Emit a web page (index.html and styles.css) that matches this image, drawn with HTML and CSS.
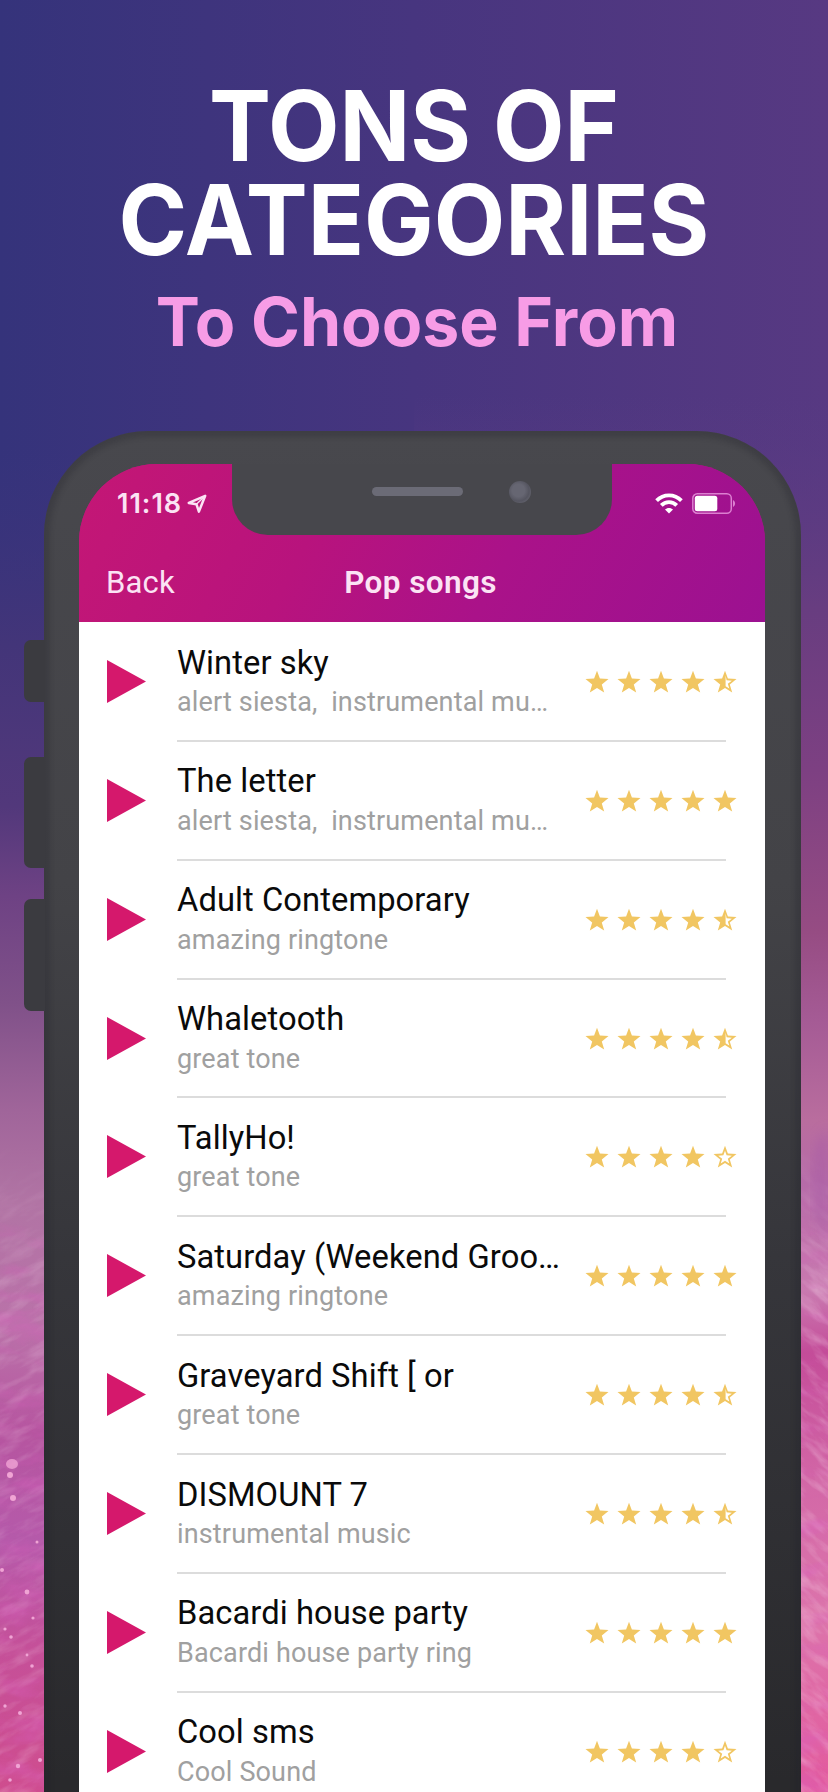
FILE: index.html
```html
<!DOCTYPE html>
<html lang="en">
<head>
<meta charset="utf-8">
<title>Tons of categories</title>
<link rel="stylesheet" href="styles.css">
</head>
<body>
<svg class="defs" width="0" height="0">
  <defs>
    <symbol id="star" viewBox="0 0 24 24"><path d="M12 .8 14.9 8.6 23.5 9 16.8 14.4 19.2 22.6 12 17.9 4.8 22.6 7.2 14.4 .5 9 9.1 8.6Z"/></symbol>
    <symbol id="star-empty" viewBox="0 0 24 24"><path fill-rule="evenodd" d="M12 .8 14.9 8.6 23.5 9 16.8 14.4 19.2 22.6 12 17.9 4.8 22.6 7.2 14.4 .5 9 9.1 8.6ZM12 5.8 10.4 10.3 5.2 10.7 9.2 13.8 7.7 18.6 12 15.8 16.3 18.6 14.8 13.8 18.8 10.7 13.6 10.3Z"/></symbol>
    <symbol id="star-half" viewBox="0 0 24 24"><path fill-rule="evenodd" d="M12 .8 14.9 8.6 23.5 9 16.8 14.4 19.2 22.6 12 17.9 4.8 22.6 7.2 14.4 .5 9 9.1 8.6ZM12.6 5.4 12.6 16.2 16.3 18.6 14.8 13.8 18.8 10.7 13.6 10.3Z"/></symbol>
    <symbol id="play" viewBox="0 0 39 43"><path d="M0 0 39 21.5 0 43Z"/></symbol>
  </defs>
</svg>
<main class="poster">
  <svg class="backdrop" width="828" height="1792" viewBox="0 0 828 1792">
    <defs>
      <linearGradient id="sky"><stop offset="0" stop-color="#35337b"/><stop offset=".5" stop-color="#47357f"/><stop offset="1" stop-color="#573982"/></linearGradient>
      <linearGradient id="left" x1="0" y1="0" x2="0" y2="1792" gradientUnits="userSpaceOnUse">
        <stop offset=".25" stop-color="#3a337d" stop-opacity="0"/><stop offset=".36" stop-color="#433579"/><stop offset=".45" stop-color="#52387b"/><stop offset=".5" stop-color="#6e4284"/><stop offset=".56" stop-color="#805189"/><stop offset=".62" stop-color="#a0659a"/><stop offset=".67" stop-color="#b174a4"/><stop offset=".74" stop-color="#ba72a9"/><stop offset=".8" stop-color="#b655a0"/><stop offset=".86" stop-color="#b55aaa"/><stop offset=".92" stop-color="#c55099"/><stop offset="1" stop-color="#cf4d8e"/>
      </linearGradient>
      <linearGradient id="right" x1="0" y1="0" x2="0" y2="1792" gradientUnits="userSpaceOnUse">
        <stop offset=".22" stop-color="#573b84" stop-opacity="0"/><stop offset=".34" stop-color="#683d80"/><stop offset=".43" stop-color="#7d4082"/><stop offset=".52" stop-color="#964c83"/><stop offset=".57" stop-color="#a55b95"/><stop offset=".625" stop-color="#b96d9e"/><stop offset=".66" stop-color="#b66ba8"/><stop offset=".72" stop-color="#c97ab0"/><stop offset=".755" stop-color="#c44c99"/><stop offset=".83" stop-color="#d368a7"/><stop offset=".9" stop-color="#dc75ab"/><stop offset="1" stop-color="#e35a9d"/>
      </linearGradient>
      <linearGradient id="fade" x1="0" y1="1140" x2="0" y2="1300" gradientUnits="userSpaceOnUse"><stop offset="0" stop-color="#000"/><stop offset="1" stop-color="#fff"/></linearGradient>
      <mask id="ground"><rect y="1100" width="828" height="692" fill="url(#fade)"/></mask>
      <filter id="grain" x="0" y="0" width="1" height="1"><feTurbulence type="fractalNoise" baseFrequency=".03 .1" numOctaves="4" seed="7"/><feColorMatrix values="0 0 0 0 1  0 0 0 0 .8  0 0 0 0 .92  2.4 0 0 0 -1.05"/></filter>
      <filter id="shade" x="0" y="0" width="1" height="1"><feTurbulence type="fractalNoise" baseFrequency=".018 .045" numOctaves="4" seed="21"/><feColorMatrix values="0 0 0 0 .7  0 0 0 0 .12  0 0 0 0 .52  2.6 0 0 0 -1.2"/></filter>
      <filter id="soft"><feGaussianBlur stdDeviation="6"/></filter>
    </defs>
    <rect width="828" height="1792" fill="url(#sky)"/>
    <rect width="414" height="1792" fill="url(#left)"/>
    <rect x="414" width="414" height="1792" fill="url(#right)"/>
    <g mask="url(#ground)">
      <g transform="rotate(-28 22 1450)"><rect x="-400" y="1000" width="900" height="900" filter="url(#grain)" opacity=".2"/></g>
      <g transform="rotate(40 814 1450)"><rect x="450" y="1000" width="800" height="900" filter="url(#grain)" opacity=".3"/></g>
      <rect y="1200" width="828" height="592" filter="url(#shade)" opacity=".4"/>
    </g>
    <path d="M828 1128 814 1146 812 1210 828 1244Z" fill="#a85ba5" opacity=".55" filter="url(#soft)"/>
    <g fill="#f0a4d4">
      <ellipse cx="12" cy="1464" rx="6" ry="5" opacity=".8"/><circle cx="10" cy="1475" r="3"/><circle cx="13" cy="1498" r="3"/><circle cx="37" cy="1542" r="1.5"/><circle cx="2" cy="1570" r="2"/><circle cx="27" cy="1592" r="2.4"/><circle cx="33" cy="1618" r="1.6"/><circle cx="5" cy="1629" r="1.6"/><circle cx="11" cy="1637" r="1.8"/><circle cx="32" cy="1666" r="1.8"/><circle cx="20" cy="1713" r="2"/><circle cx="5" cy="1706" r="1.7"/><circle cx="40" cy="1760" r="2"/><circle cx="18" cy="1766" r="2.2"/><circle cx="10" cy="1780" r="1.8"/><circle cx="27" cy="1655" r="1.4"/>
    </g>
  </svg>

  <header class="headline">
    <h1 class="headline-title"><span>TONS OF</span><span>CATEGORIES</span></h1>
    <p class="headline-sub">To Choose From</p>
  </header>

  <section class="phone">
    <i class="key key-mute"></i><i class="key key-up"></i><i class="key key-down"></i>
    <div class="screen">
      <div class="topbar">
        <div class="status">
          <div class="clock"><span>11:18</span>
            <svg width="20" height="20" viewBox="0 0 20 20"><path d="M18.2 1.8 1.8 8.9 9.4 10.2 11.9 17.6Z" fill="none" stroke="#fbe3f4" stroke-width="2.5" stroke-linejoin="round"/><path d="M18 2 9.4 10.2" stroke="#fbe3f4" stroke-width="1.4"/></svg>
          </div>
          <div class="signals">
            <svg width="28" height="21" viewBox="0 0 28 21" fill="none" stroke="#fff" stroke-width="3.8"><path d="M1.6 7.6C8.5 .5 19.5 .5 26.4 7.6"/><path d="M6.3 12.3C10.5 8 17.5 8 21.7 12.3"/><path d="M14 20.5 10 16.6C12 14.5 16 14.5 18 16.6Z" fill="#fff" stroke="none"/></svg>
            <svg width="44" height="21" viewBox="0 0 44 21"><rect x=".8" y=".8" width="38.5" height="19.4" rx="4.5" fill="none" stroke="#dc7fd0" stroke-width="1.5"/><rect x="2.8" y="2.8" width="22.5" height="15.4" rx="2.5" fill="#fff"/><path d="M41 7C43.8 8.5 43.8 12.5 41 14Z" fill="#dc7fd0"/></svg>
          </div>
        </div>
        <nav class="nav"><span class="back">Back</span><h2 class="nav-title">Pop songs</h2><span></span></nav>
        <div class="notch"><i class="speaker"></i><i class="camera"></i></div>
      </div>
      <ul class="list" id="songs"></ul>
    </div>
  </section>
</main>
<script src="app.js"></script>
</body>
</html>
```

FILE: styles.css
```css
* { box-sizing: border-box; }
body { margin: 0; font-family: Roboto, "Liberation Sans", sans-serif; }
h1, h2, p, ul { margin: 0; padding: 0; }
.defs { position: absolute; }
.poster { position: relative; width: 828px; height: 1792px; overflow: hidden; }
.backdrop { position: absolute; inset: 0; z-index: -1; }

.headline { height: 431px; padding-top: 79px; text-align: center; font-family: Inter, sans-serif; white-space: nowrap; }
.headline-title { font-size: 98px; line-height: 93.5px; font-weight: 700; color: #fff; transform: scaleX(.947); }
.headline-title span { display: block; }
.headline-sub { margin-top: 14px; padding-left: 6px; font-size: 67.5px; line-height: 84px; font-weight: 700; color: #f79ce6; transform: scaleX(.98); }

.phone {
  position: relative; width: 757px; height: 1500px; margin-left: 44px; padding: 33px 36px 0 35px;
  border-radius: 104px 104px 0 0;
  background: linear-gradient(#48484d 0, #434347 30%, #36363b 55%, #29292c 90%);
  box-shadow: inset 0 0 5px 6px rgba(35, 35, 40, .24);
}
.key { position: absolute; left: -20px; width: 21px; border-radius: 7px 0 0 7px; background: #3b3b40; }
.key-mute { top: 209px; height: 62px; }
.key-up { top: 326px; height: 111px; }
.key-down { top: 468px; height: 112px; }
.screen { height: 1467px; border-radius: 78px 78px 0 0; overflow: hidden; background: linear-gradient(#b6137f 158px, #fff 158px); }
.topbar { position: relative; height: 158px; background: linear-gradient(118deg, #c41775 0, #b8137d 35%, #aa1289 62%, #9c1191 100%); }
.status { height: 80px; padding: 29px 29px 0 38px; display: flex; justify-content: space-between; }
.clock { display: flex; height: 21px; gap: 5px; align-items: center; font: 600 27px/21px Inter, sans-serif; letter-spacing: 1px; color: #fbe3f4; }
.signals { display: flex; gap: 9px; height: 21px; }
.nav { height: 78px; display: grid; grid-template-columns: 1fr auto 1fr; align-items: center; padding: 0 30px 1px 27px; color: #fbe3f4; }
.back { font-size: 31px; letter-spacing: .2px; }
.nav-title { font-size: 31.5px; font-weight: 600; letter-spacing: .4px; }
.notch { position: absolute; left: 153px; top: -2px; width: 380px; height: 73px; border-radius: 0 0 36px 36px; background: #47474c; }
.speaker { position: absolute; left: 140px; top: 25px; width: 91px; height: 9px; border-radius: 5px; background: #6b6b76; }
.camera { position: absolute; left: 277px; top: 19px; width: 22px; height: 22px; border-radius: 50%; background: radial-gradient(circle at 43% 43%, #666672 0 35%, #555560 60%, #686872 85%); }

.list { list-style: none; }
.song { display: flex; height: 118.86px; padding: 0 27px 0 28px; }
.song-play { width: 39px; height: 43px; margin: 38px 31px 0 0; fill: #d5186c; flex: none; }
.song-body { position: relative; flex: 1; min-width: 0; padding-top: 20.5px; white-space: nowrap; }
.song-body::after { content: ""; position: absolute; left: 0; bottom: -1px; width: 549px; height: 2px; background: #dcdcdc; }
.song-name { font-size: 32.7px; line-height: 40px; letter-spacing: .08px; color: #0a0a0a; }
.song-tags { margin-top: 1.5px; font-size: 27px; line-height: 36px; letter-spacing: .15px; color: #a0a0a0; }
.stars { display: flex; gap: 8.1px; margin: 48px 1px 0 -1px; height: 24px; fill: #f1c662; }
```

FILE: app.js
```js
const songs = [
  ["Winter sky", "alert siesta,\u00a0 instrumental mu\u2026", 4.5],
  ["The letter", "alert siesta,\u00a0 instrumental mu\u2026", 5],
  ["Adult Contemporary", "amazing ringtone", 4.5],
  ["Whaletooth", "great tone", 4.5],
  ["TallyHo!", "great tone", 4],
  ["Saturday (Weekend Groo\u2026", "amazing ringtone", 5],
  ["Graveyard Shift [ or", "great tone", 4.5],
  ["DISMOUNT 7", "instrumental music", 4.5],
  ["Bacardi house party", "Bacardi house party ring", 5],
  ["Cool sms", "Cool Sound", 4]
];

function star(rating, i) {
  const id = rating >= i ? "star" : rating >= i - 0.5 ? "star-half" : "star-empty";
  return `<svg width="24" height="24"><use href="#${id}"/></svg>`;
}

document.getElementById("songs").innerHTML = songs.map(([name, tags, rating]) => `
  <li class="song">
    <svg class="song-play"><use href="#play"/></svg>
    <div class="song-body"><div class="song-name">${name}</div><div class="song-tags">${tags}</div></div>
    <div class="stars">${[1, 2, 3, 4, 5].map(i => star(rating, i)).join("")}</div>
  </li>`).join("");
```
